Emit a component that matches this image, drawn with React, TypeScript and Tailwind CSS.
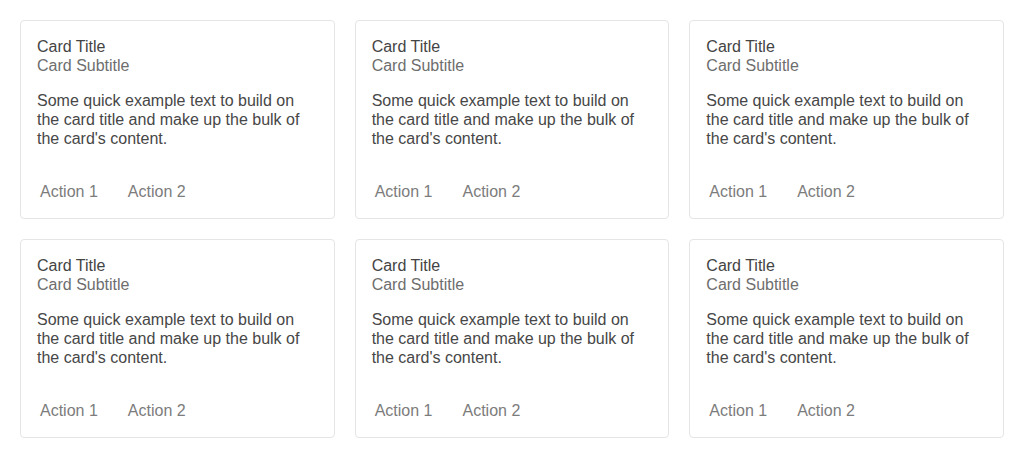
import React from "react";

function Card() {
  return (
    <div className="flex flex-col rounded-[4px] border border-[#e5e5e5] bg-white px-4 pt-4 pb-[17px]">
      <div className="text-[16px] leading-[19px] text-[#444444]">Card Title</div>
      <div className="text-[16px] leading-[19px] text-[#6e6e6e]">Card Subtitle</div>
      <p className="mt-4 text-[16px] leading-[19px] text-[#474747]">
        Some quick example text to build on the card title and make up the bulk of the card's content.
      </p>
      <div className="mt-[34px] ml-[3px] flex gap-[30px] text-[16px] leading-[19px] text-[#7c7c7c]">
        <span>Action 1</span>
        <span>Action 2</span>
      </div>
    </div>
  );
}

export default function App() {
  return (
    <div
      className="grid min-h-[458px] grid-cols-3 content-start gap-5 bg-white p-5"
      style={{ fontFamily: '"Liberation Sans", Arial, sans-serif' }}
    >
      {Array.from({ length: 6 }).map((_, i) => (
        <Card key={i} />
      ))}
    </div>
  );
}
